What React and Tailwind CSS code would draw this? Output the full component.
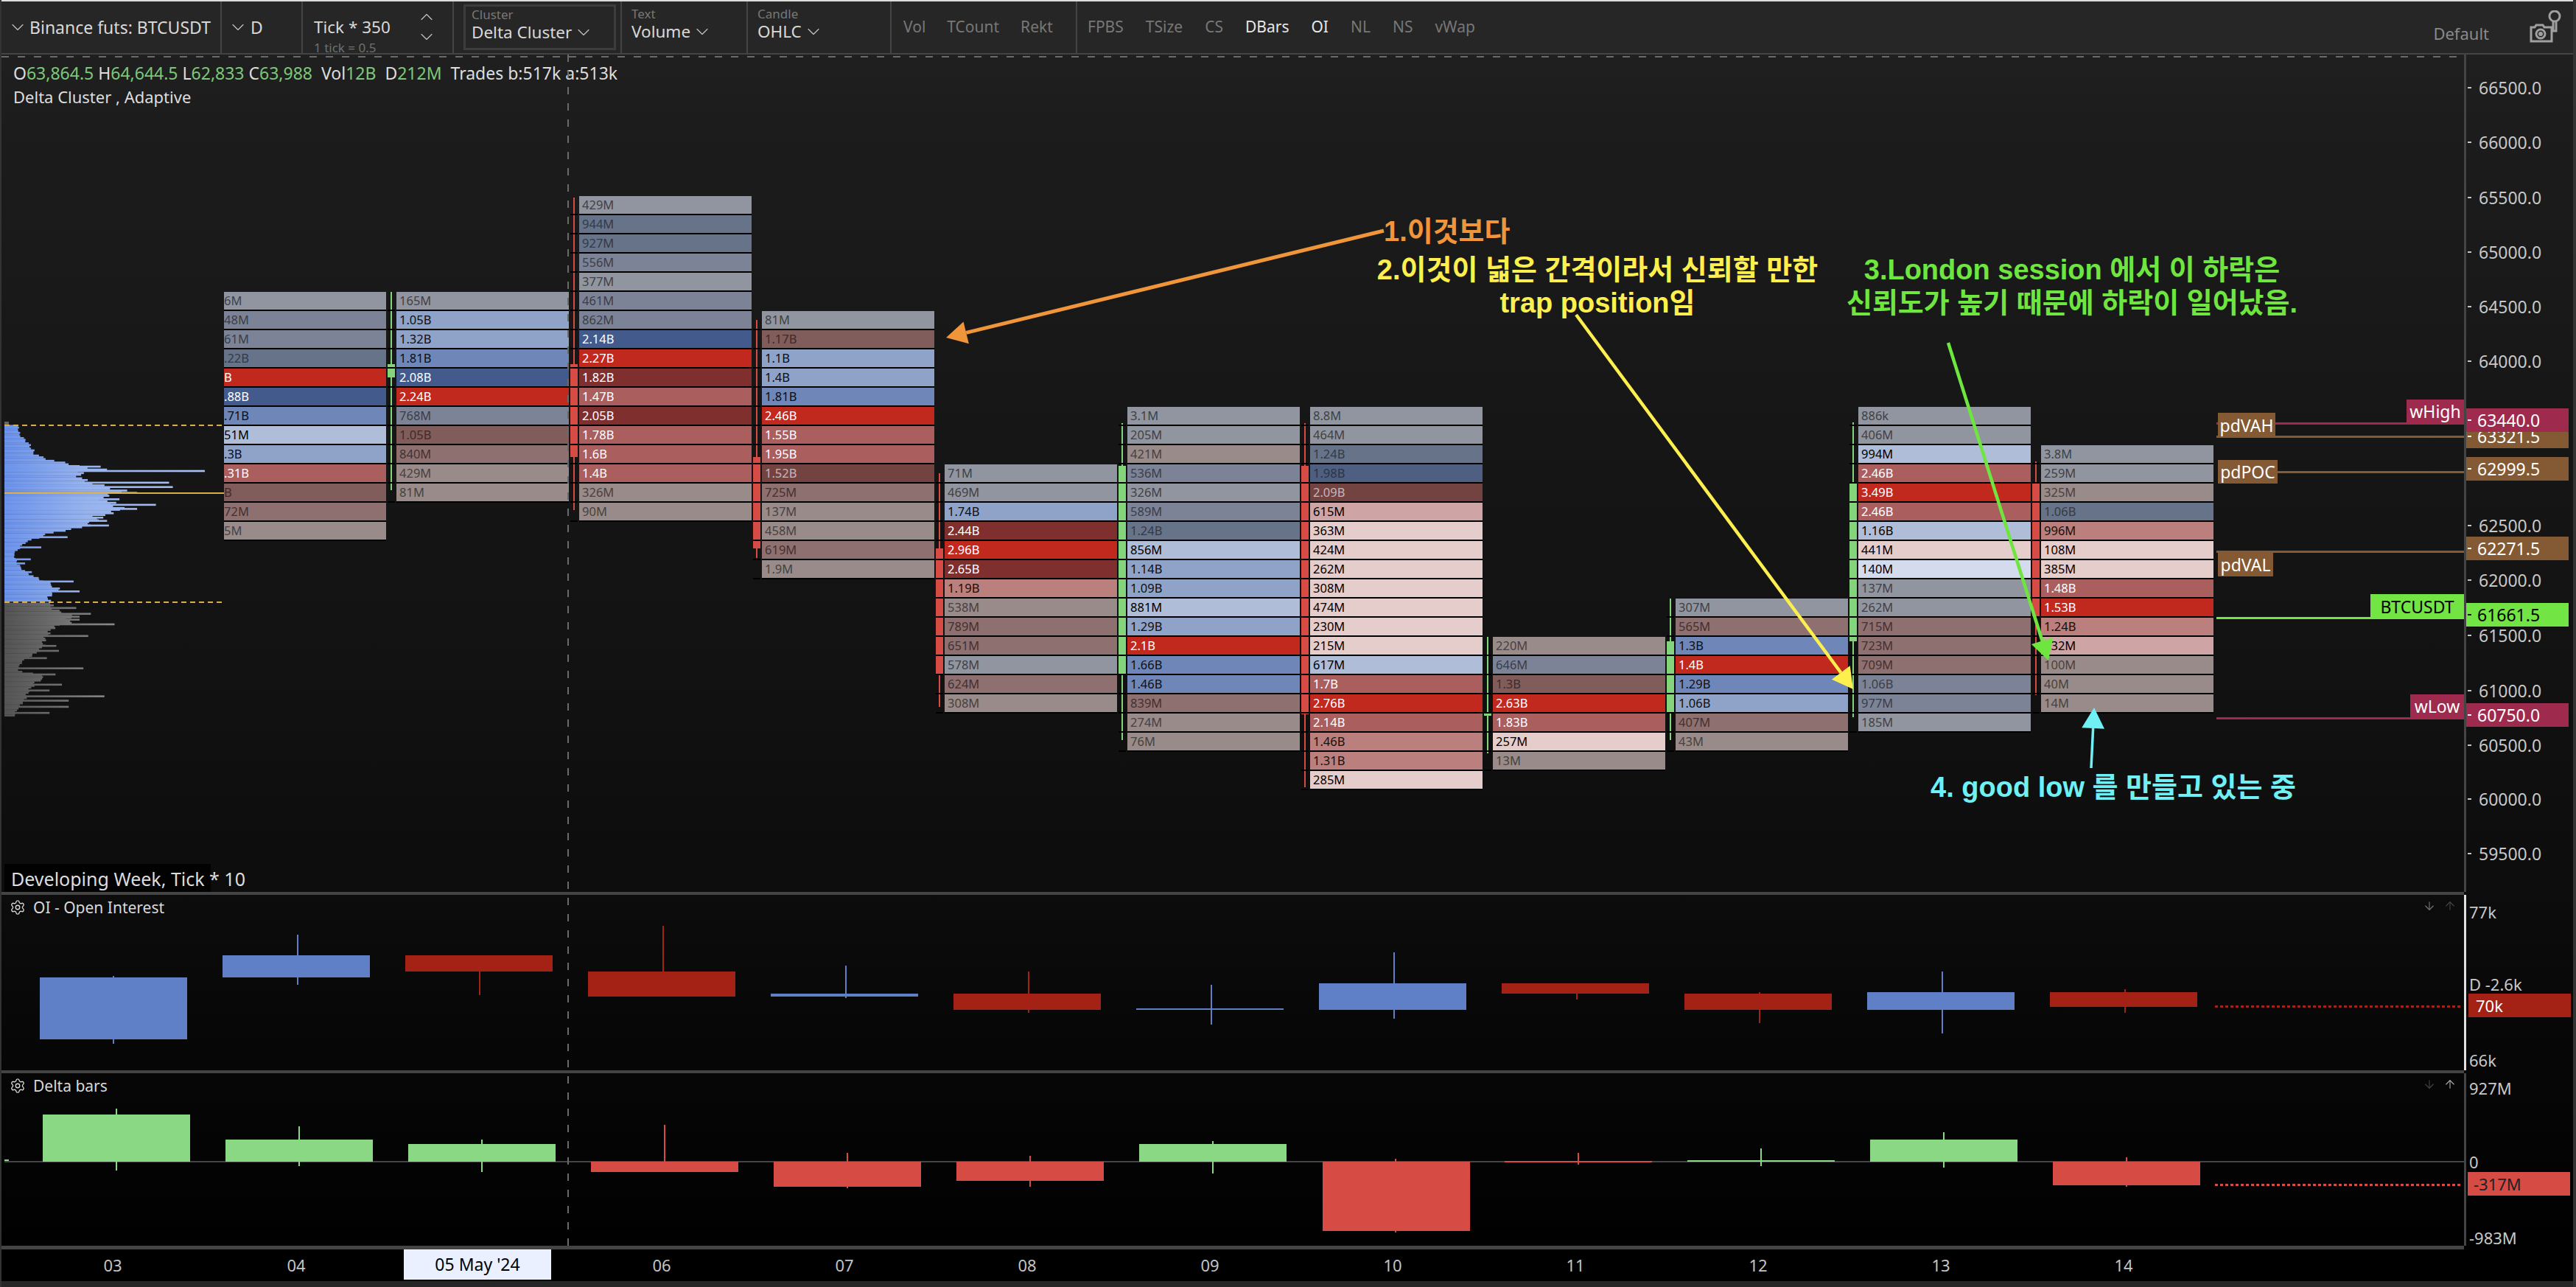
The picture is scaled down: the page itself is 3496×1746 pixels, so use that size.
import { ChevronDown, ChevronUp, Settings, ArrowDown, ArrowUp } from "lucide-react";

// x positions below are page coordinates, panes start at x=2 and the main pane at y=74
const CX = 2;
const MAIN_TOP = 74;
const ROW = 26;

const CELL = {
  g: "bg-[#91959f] text-[#3e4147]",
  s: "bg-[#7d8397] text-[#383e49]",
  t: "bg-[#667389] text-[#333a48]",
  N: "bg-[#4f5f81] text-[#2a3448]",
  n: "bg-[#425a8c] text-white",
  a: "bg-[#6f87b8] text-[#0b0f1a]",
  b: "bg-[#8fa3c9] text-[#0b0f1a]",
  c: "bg-[#afbdd9] text-black",
  e: "bg-[#d3dbec] text-black",
  r: "bg-[#c1291e] text-white",
  d: "bg-[#7f2f2d] text-white",
  D: "bg-[#734342] text-[#c9b5b5]",
  m: "bg-[#aa5e5e] text-white",
  M: "bg-[#bb7f7d] text-[#111111]",
  p: "bg-[#e5cdcc] text-black",
  P: "bg-[#cfa4a4] text-black",
  w: "bg-[#805c5b] text-[#402a2a]",
  x: "bg-[#8e7071] text-[#43302f]",
  y: "bg-[#988b89] text-[#474141]",
};

const col = (s) => s.split(" ").map((c) => c.split(":"));

const COLUMNS = [
  { x: 538, k: 5, up: true, wick: [396, 665], body: [494, 512], rows: col("165M:g 1.05B:b 1.32B:b 1.81B:a 2.08B:n 2.24B:r 768M:s 1.05B:w 840M:x 429M:y 81M:y") },
  { x: 786, k: 0, up: false, wick: [268, 692], body: [494, 620], rows: col("429M:g 944M:t 927M:t 556M:s 377M:g 461M:s 862M:s 2.14B:n 2.27B:r 1.82B:d 1.47B:m 2.05B:d 1.78B:m 1.6B:m 1.4B:m 326M:y 90M:y") },
  { x: 1034, k: 6, up: false, wick: [434, 757], body: [620, 744], rows: col("81M:g 1.17B:w 1.1B:b 1.4B:b 1.81B:a 2.46B:r 1.55B:m 1.95B:m 1.52B:D 725M:x 137M:y 458M:y 619M:x 1.9M:y") },
  { x: 1282, k: 14, up: false, wick: [642, 959], body: [744, 914], rows: col("71M:g 469M:g 1.74B:b 2.44B:d 2.96B:r 2.65B:d 1.19B:M 538M:y 789M:x 651M:x 578M:g 624M:x 308M:y") },
  { x: 1530, k: 11, up: true, wick: [574, 1004], body: [632, 914], rows: col("3.1M:g 205M:g 421M:y 536M:s 326M:g 589M:s 1.24B:t 856M:c 1.14B:b 1.09B:b 881M:c 1.29B:b 2.1B:r 1.66B:a 1.46B:a 839M:x 274M:y 76M:y") },
  { x: 1778, k: 11, up: false, wick: [574, 1068], body: [632, 969], rows: col("8.8M:g 464M:g 1.24B:t 1.98B:N 2.09B:D 615M:P 363M:p 424M:p 262M:p 308M:p 474M:p 230M:p 215M:p 617M:c 1.7B:m 2.76B:r 2.14B:m 1.46B:M 1.31B:M 285M:p") },
  { x: 2026, k: 23, up: true, wick: [864, 1022], body: [968, 971], rows: col("220M:y 646M:s 1.3B:w 2.63B:r 1.83B:m 257M:p 13M:y") },
  { x: 2274, k: 21, up: true, wick: [812, 1004], body: [870, 966], rows: col("307M:g 565M:x 1.3B:a 1.4B:r 1.29B:a 1.06B:b 407M:x 43M:y") },
  { x: 2522, k: 11, up: true, wick: [573, 973], body: [656, 870], rows: col("886k:g 406M:g 994M:c 2.46B:m 3.49B:r 2.46B:m 1.16B:c 441M:p 140M:e 137M:g 262M:g 715M:x 723M:x 709M:x 1.06B:s 977M:s 185M:g") },
  { x: 2770, k: 13, up: false, wick: [626, 943], body: [656, 838], rows: col("3.8M:g 259M:g 325M:y 1.06B:t 996M:M 108M:p 385M:p 1.48B:m 1.53B:r 1.24B:M 732M:P 100M:y 40M:y 14M:y") },
];

// first column is cut off by the profile
const FIRST = col("6M:g 48M:s 61M:s .22B:t B:r .88B:n .71B:a 51M:c .3B:b .31B:m B:w 72M:x 5M:y");

const OI_BARS = [
  [54, 1326, 1410, 153, 1324, 1416, "b"],
  [302, 1296, 1326, 403, 1268, 1336, "b"],
  [550, 1296, 1318, 650, 1296, 1350, "r"],
  [798, 1318, 1352, 899, 1256, 1352, "r"],
  [1046, 1348, 1352, 1147, 1310, 1354, "b"],
  [1294, 1348, 1370, 1395, 1318, 1374, "r"],
  [1542, 1368, 1370, 1643, 1336, 1390, "b"],
  [1790, 1334, 1370, 1891, 1292, 1382, "b"],
  [2038, 1334, 1348, 2139, 1334, 1356, "r"],
  [2286, 1348, 1370, 2387, 1346, 1388, "r"],
  [2534, 1346, 1370, 2635, 1318, 1402, "b"],
  [2782, 1346, 1366, 2883, 1342, 1374, "r"],
];

const DELTA_BARS = [
  [58, 1512, 1576, 157, 1504, 1588, "g"],
  [306, 1546, 1576, 405, 1528, 1582, "g"],
  [554, 1552, 1576, 653, 1546, 1590, "g"],
  [802, 1576, 1590, 901, 1526, 1590, "r"],
  [1050, 1576, 1610, 1149, 1564, 1612, "r"],
  [1298, 1576, 1602, 1397, 1568, 1610, "r"],
  [1546, 1552, 1576, 1645, 1548, 1592, "g"],
  [1795, 1576, 1670, 1893, 1572, 1672, "r"],
  [2042, 1575, 1577, 2141, 1564, 1580, "r"],
  [2290, 1574, 1576, 2389, 1558, 1582, "g"],
  [2538, 1546, 1576, 2637, 1536, 1584, "g"],
  [2786, 1576, 1608, 2885, 1570, 1610, "r"],
];

const BAR_COLOR = { b: "#5f80c6", r: "#a42115", g: "#8ad784", R: "#d64b43" };

const PRICES = [
  ["66500.0", 119], ["66000.0", 193], ["65500.0", 268], ["65000.0", 342], ["64500.0", 416],
  ["64000.0", 490], ["62500.0", 713], ["62000.0", 787], ["61500.0", 862],
  ["61000.0", 937], ["60500.0", 1011], ["60000.0", 1084], ["59500.0", 1158],
];

const TAGS = [
  ["63321.5", 576, 608, "bg-[#835a33]", "text-white"],
  ["63440.0", 554, 586, "bg-[#9e2b4e]", "text-white"],
  ["62999.5", 620, 652, "bg-[#835a33]", "text-white"],
  ["62271.5", 728, 760, "bg-[#835a33]", "text-white"],
  ["61661.5", 818, 850, "bg-[#72e444]", "text-black"],
  ["60750.0", 954, 986, "bg-[#9e2b4e]", "text-white"],
];

const DATES = [["03", 153], ["04", 402], ["06", 898], ["07", 1146], ["08", 1394], ["09", 1642], ["10", 1890], ["11", 2138], ["12", 2386], ["13", 2634], ["14", 2882]];

function Chevron() {
  return <ChevronDown size={28} strokeWidth={1} className="shrink-0 text-[#c4c4c4]" />;
}

function Selector({ label, value, width, boxed }) {
  return (
    <div className={"h-full border-r-2 border-[#444444] " + width + (boxed ? " p-[4px_6px_4px_13px]" : " pl-[13px]")}>
      <div className={boxed ? "h-full border-[3px] border-[#3d3d3d] pl-[8px]" : "pt-[5px]"}>
        <div className={"text-[17px] leading-[20px] text-[#777777] " + (boxed ? "mt-[1px]" : "mt-[2px]")}>{label}</div>
        <div className="flex items-center gap-[2px] text-[22.5px] leading-[26px] text-[#d8d8d8]">
          {value}
          <Chevron />
        </div>
      </div>
    </div>
  );
}

function ToggleGroup({ items, width }) {
  return (
    <div className={"h-full flex items-center gap-[29px] border-r-2 border-[#444444] pl-[16px] text-[21px] text-[#777777] " + width}>
      {items.map((it) => (
        <span key={it.t}>{it.t}</span>
      ))}
    </div>
  );
}

function CameraIcon() {
  return (
    <svg width="44" height="46" viewBox="0 0 44 46" fill="none" stroke="#a0a0a0" strokeWidth="3">
      <path d="M3 23h5l2-3h9l2 3h10v19H3z" />
      <circle cx="16" cy="32" r="6" />
      <circle cx="16" cy="32" r="1.5" />
      <circle cx="35" cy="8" r="7" />
      <path d="M33 15v13h4V15" />
    </svg>
  );
}

function Toolbar() {
  return (
    <div className="h-[70px] shrink-0 flex items-center bg-[#262626]">
      <div className="h-full w-[299px] flex items-center gap-[2px] pl-[8px] border-r-2 border-[#444444] text-[23px] text-[#d8d8d8]">
        <Chevron />
        <span>Binance futs: BTCUSDT</span>
      </div>
      <div className="h-full w-[110px] flex items-center gap-[3px] pl-[8px] border-r-2 border-[#444444] text-[23px] text-[#d8d8d8]">
        <Chevron />
        <span>D</span>
      </div>
      <div className="h-full w-[205px] flex border-r-2 border-[#444444] pl-[15px]">
        <div className="w-[139px] pt-[21px]">
          <div className="text-[22.5px] leading-[28px] text-[#d8d8d8]">Tick * 350</div>
          <div className="mt-[4px] text-[17px] leading-[20px] text-[#707070]">1 tick = 0.5</div>
        </div>
        <div className="flex flex-col -space-y-[1px] pt-[7px]">
          <ChevronUp size={28} strokeWidth={1} className="text-[#c4c4c4]" />
          <ChevronDown size={28} strokeWidth={1} className="text-[#c4c4c4]" />
        </div>
      </div>
      <Selector label="Cluster" value="Delta Cluster" width="w-[228px]" boxed />
      <Selector label="Text" value="Volume" width="w-[171px]" />
      <Selector label="Candle" value="OHLC" width="w-[195px]" />
      <ToggleGroup width="w-[252px]" items={[{ t: "Vol" }, { t: "TCount" }, { t: "Rekt" }]} />
      <div className="flex-1 h-full flex items-center gap-[30px] pl-[14px] text-[21px] text-[#777777]">
        {[["FPBS"], ["TSize"], ["CS"], ["DBars", 1], ["OI", 1], ["NL"], ["NS"], ["vWap"]].map(([t, on]) => (
          <span key={t} className={on ? "text-[#e8e8e8]" : ""}>{t}</span>
        ))}
      </div>
      <div className="h-full flex items-center pr-[16px]">
        <span className="mt-[16px] mr-[54px] text-[22px] text-[#8a8a8a]">Default</span>
        <CameraIcon />
      </div>
    </div>
  );
}

function Cell({ text, code, pad }) {
  return (
    <div className={"flex-1 h-[24px] flex items-center whitespace-nowrap overflow-hidden text-[16.5px] " + pad + " " + CELL[code]}>
      {text}
    </div>
  );
}

function ClusterColumn({ x, k, up, wick, body, rows }) {
  const top = 266 + k * ROW;
  const color = up ? "bg-[#83d47a]" : "bg-[#d64b43]";
  return (
    <div className="absolute w-[248px]" style={{ left: x - 14 - CX, top: top - MAIN_TOP }}>
      <div className={"absolute left-[6px] w-[2px] " + color} style={{ top: wick[0] - top, height: wick[1] - wick[0] }} />
      <div className={"absolute left-[2px] w-[10px] " + color} style={{ top: body[0] - top, height: body[1] - body[0] }} />
      {rows.map(([text, code], i) => (
        <div key={i} className="relative h-[26px]">
          <div className="flex h-[24px]">
            <div className="w-[14px]" />
            <Cell text={text} code={code} pad="pl-[4px]" />
          </div>
          <div className="flex h-[2px]">
            <div className="w-[2px]" />
            <div className="w-[10px] bg-black" />
            <div className="w-[2px]" />
            <div className="flex-1 bg-black" />
          </div>
        </div>
      ))}
    </div>
  );
}

function lerp(points, y) {
  for (let i = 0; i < points.length - 1; i++) {
    const [y0, v0] = points[i];
    const [y1, v1] = points[i + 1];
    if (y >= y0 && y <= y1) return v0 + ((v1 - v0) * (y - y0)) / (y1 - y0);
  }
  return points[points.length - 1][1];
}

// profile is sampled in crop units of the picture: x = v / 1.96, y = 380 + v / 2.529
const BLUE_BASE = [[500, 50], [530, 55], [560, 80], [600, 100], [620, 150], [640, 235], [660, 225], [680, 225], [700, 265], [725, 350], [745, 280], [770, 320], [790, 340], [810, 275], [830, 260], [850, 230], [865, 150], [880, 115], [900, 70], [925, 50], [940, 38], [975, 50], [1000, 70], [1020, 100], [1040, 135], [1060, 165], [1080, 140], [1105, 135]];
const BLUE_SPIKES = [[640, 268], [650, 285], [655, 545], [695, 450], [710, 460], [730, 365], [752, 318], [771, 415], [785, 365], [815, 275], [826, 285], [842, 290], [882, 180], [917, 110], [958, 82], [972, 67], [1002, 85], [1034, 196], [1068, 212]];
const GREY_BASE = [[1108, 140], [1130, 150], [1150, 195], [1175, 195], [1190, 150], [1230, 125], [1260, 120], [1285, 95], [1310, 60], [1340, 50], [1360, 130], [1380, 100], [1410, 80], [1440, 70], [1460, 55], [1480, 45], [1500, 38]];
const GREY_SPIKES = [[1125, 203], [1145, 242], [1155, 212], [1165, 212], [1181, 305], [1221, 235], [1255, 150], [1272, 157], [1297, 125], [1332, 222], [1353, 148], [1388, 165], [1408, 132], [1428, 278], [1443, 183], [1464, 183], [1485, 132]];

function ProfileBars({ base, spikes, from, to, fill }) {
  const bars = [];
  for (let y = from, i = 0; y < to; y += 6, i++) {
    const v = lerp(base, y) * (0.95 + 0.05 * Math.sin(i * 1.9));
    bars.push([y, v]);
  }
  spikes.forEach((s) => bars.push(s));
  return bars.map(([y, v], i) => (
    <rect key={i} x="4" y={380 + y / 2.529 - 1.3 - MAIN_TOP} width={Math.max(2, (v - 12) / 1.96)} height="2.6" fill={fill} />
  ));
}

function Profile() {
  return (
    <svg className="absolute left-0 top-0" width="310" height="920">
      <defs>
        <linearGradient id="pb" gradientUnits="userSpaceOnUse" x1="4" x2="280" y1="0" y2="0">
          <stop offset="0" stopColor="#6c93ec" />
          <stop offset="0.4" stopColor="#97b3ee" />
          <stop offset="1" stopColor="#a9c0f2" />
        </linearGradient>
        <linearGradient id="pg" gradientUnits="userSpaceOnUse" x1="4" x2="160" y1="0" y2="0">
          <stop offset="0" stopColor="#545454" />
          <stop offset="1" stopColor="#8c8c8c" />
        </linearGradient>
      </defs>
      <rect x="4" y={572 - MAIN_TOP} width="6" height="6" fill="#666666" />
      <ProfileBars base={BLUE_BASE} spikes={BLUE_SPIKES} from={500} to={1105} fill="url(#pb)" />
      <ProfileBars base={GREY_BASE} spikes={GREY_SPIKES} from={1110} to={1500} fill="url(#pg)" />
      <line x1="4" x2="302" y1={577 - MAIN_TOP} y2={577 - MAIN_TOP} stroke="#d9ac4c" strokeWidth="2" strokeDasharray="7 5" />
      <line x1="4" x2="302" y1={669 - MAIN_TOP} y2={669 - MAIN_TOP} stroke="#d9ac4c" strokeWidth="2" />
      <line x1="4" x2="302" y1={817 - MAIN_TOP} y2={817 - MAIN_TOP} stroke="#d9ac4c" strokeWidth="2" strokeDasharray="7 5" />
    </svg>
  );
}

function Arrow({ from, to, color, width, head = 28 }) {
  const dx = to[0] - from[0];
  const dy = to[1] - from[1];
  const len = Math.hypot(dx, dy);
  const ux = dx / len;
  const uy = dy / len;
  const bx = to[0] - ux * head;
  const by = to[1] - uy * head;
  const half = head * 0.55;
  const pts = [to, [bx - uy * half, by + ux * half], [bx + uy * half, by - ux * half]];
  return (
    <g transform={`translate(${-CX} ${-MAIN_TOP})`}>
      <line x1={from[0]} y1={from[1]} x2={bx} y2={by} stroke={color} strokeWidth={width} />
      <polygon points={pts.map((p) => p.join(",")).join(" ")} fill={color} />
    </g>
  );
}

function Annotations() {
  const font = "font-['Liberation_Sans','Noto_Sans_CJK_KR',sans-serif]";
  return (
    <>
      <svg className="absolute left-0 top-0 pointer-events-none" width="3342" height="1136">
        <Arrow from={[1878, 313]} to={[1284, 458]} color="#f0953a" width={5} />
        <Arrow from={[2139, 427]} to={[2515, 935]} color="#fdf04e" width={4.5} />
        <Arrow from={[2644, 465]} to={[2780, 896]} color="#6ee63f" width={4.5} />
        <Arrow from={[2838, 1042]} to={[2842, 960]} color="#6ff0f5" width={3.5} />
      </svg>
      <div className={"absolute left-[1876px] top-[218px] text-[38px] leading-[44px] font-bold text-[#f0953a] " + font}>
        1.이것보다
      </div>
      <div className={"absolute left-[1766px] top-[270px] w-[800px] text-center text-[38px] leading-[45px] font-bold text-[#fdf04e] " + font}>
        <div>2.이것이 넓은 간격이라서 신뢰할 만한</div>
        <div>trap position임</div>
      </div>
      <div className={"absolute left-[2410px] top-[270px] w-[800px] text-center text-[38px] leading-[45px] font-bold text-[#6ee63f] " + font}>
        <div>3.London session 에서 이 하락은</div>
        <div>신뢰도가 높기 때문에 하락이 일어났음.</div>
      </div>
      <div className={"absolute left-[2618px] top-[972px] whitespace-nowrap text-[38px] leading-[44px] font-bold text-[#6ff0f5] " + font}>
        4. good low 를 만들고 있는 중
      </div>
    </>
  );
}

function Level({ top, left, width, color }) {
  return <div className={"absolute h-[3px] " + color} style={{ top: top - MAIN_TOP, left: left - CX, width }} />;
}

function Tag({ text, left, width, top, height, className }) {
  return (
    <div
      className={"absolute flex items-center justify-center text-[23px] whitespace-nowrap " + className}
      style={{ left: left - CX, width, top: top - MAIN_TOP, height }}
    >
      {text}
    </div>
  );
}

function Legend() {
  const g = "text-[#7cc87a]";
  return (
    <div className="pl-[16px] pt-[10px] text-[#dddddd]">
      <div className="text-[23px] leading-[30px] whitespace-pre">
        O<span className={g}>63,864.5</span> H<span className={g}>64,644.5</span> L<span className={g}>62,833</span> C<span className={g}>63,988</span>{"  "}Vol<span className={g}>12B</span>{"  "}D<span className={g}>212M</span>{"  "}Trades b:517k a:513k
      </div>
      <div className="text-[22px] leading-[34px]">Delta Cluster , Adaptive</div>
    </div>
  );
}

function MainPane() {
  return (
    <div className="h-[1136px] flex">
      <div className="relative w-[3342px] overflow-hidden">
        <Legend />
        <Profile />
        <div className="absolute left-[302px] top-[322px] w-[220px]">
          {FIRST.map(([text, code], i) => (
            <div key={i} className="h-[26px] bg-black">
              <Cell text={text} code={code} pad="" />
            </div>
          ))}
        </div>
        {COLUMNS.map((c) => (
          <ClusterColumn key={c.x} {...c} />
        ))}

        <Level top={573} left={3008} width={336} color="bg-[#9e2b4e]" />
        <Level top={591} left={3008} width={336} color="bg-[#835a33]" />
        <Level top={639} left={3091} width={253} color="bg-[#835a33]" />
        <Level top={747} left={3008} width={336} color="bg-[#835a33]" />
        <Level top={837} left={3008} width={336} color="bg-[#72e444]" />
        <Level top={973} left={3008} width={336} color="bg-[#9e2b4e]" />
        <Tag text="pdVAH" left={3010} width={78} top={560} height={34} className="bg-[#835a33] text-white" />
        <Tag text="wHigh" left={3266} width={78} top={542} height={33} className="bg-[#9e2b4e] text-white" />
        <Tag text="pdPOC" left={3010} width={81} top={624} height={32} className="bg-[#835a33] text-white" />
        <Tag text="pdVAL" left={3010} width={75} top={750} height={32} className="bg-[#835a33] text-white" />
        <Tag text="BTCUSDT" left={3217} width={127} top={806} height={34} className="bg-[#72e444] text-black" />
        <Tag text="wLow" left={3271} width={73} top={942} height={33} className="bg-[#9e2b4e] text-white" />

        <Annotations />

        <div className="absolute left-[4px] top-[1098px] bg-black/80 h-[38px] w-[280px]" />
        <div className="absolute left-[13px] top-[1100px] text-[25px] leading-[36px] text-[#dddddd] whitespace-nowrap">Developing Week, Tick * 10</div>
      </div>
      <PriceAxis />
    </div>
  );
}

function PriceAxis() {
  return (
    <div className="relative w-[148px] border-l-[3px] border-[#444444] text-[23px] overflow-hidden">
      {PRICES.map(([p, y]) => (
        <div key={p} className="absolute left-[2px] flex items-center gap-[10px] text-[#c8c8c8] h-[32px]" style={{ top: y - MAIN_TOP - 16 }}>
          <span className="w-[5px] h-[2px] bg-[#c8c8c8]" />
          {p}
        </div>
      ))}
      {TAGS.map(([p, a, b, bg, fg]) => (
        <div key={p} className={"absolute left-0 w-[139px] flex items-center gap-[8px] pl-[2px] " + bg + " " + fg} style={{ top: a - MAIN_TOP, height: b - a }}>
          <span className={"w-[5px] h-[2px] " + (fg === "text-black" ? "bg-black" : "bg-white")} />
          {p}
        </div>
      ))}
    </div>
  );
}

function SubPane({ title, bars, top, height, zero, dottedY, dottedClass, axis, axisClass, down, up }) {
  return (
    <div className="flex" style={{ height }}>
      <div className="relative w-[3342px] overflow-hidden">
        <div className="flex items-center gap-[10px] pl-[11px] pt-[5px] text-[21px] leading-[24px] text-[#d8d8d8]">
          <Settings size={22} strokeWidth={1.5} />
          <span>{title}</span>
        </div>
        <div className="absolute right-[10px] top-[6px] flex gap-[10px]">
          <ArrowDown size={18} strokeWidth={1.5} className={down} />
          <ArrowUp size={18} strokeWidth={1.5} className={up} />
        </div>
        {zero && <div className="absolute left-[4px] right-0 h-[2px] bg-[#444444]" style={{ top: zero - top }} />}
        {zero && <div className="absolute left-[4px] w-[6px] h-[2px] bg-[#8ad784]" style={{ top: zero - top - 2 }} />}
        {bars.map(([x, y0, y1, wx, w0, w1, c], i) => {
          const color = c === "r" && zero ? BAR_COLOR.R : BAR_COLOR[c];
          return (
            <div key={i}>
              <div className="absolute w-[1.5px]" style={{ left: wx - CX, top: w0 - top, height: w1 - w0, background: color }} />
              <div className="absolute w-[200px]" style={{ left: x - CX, top: y0 - top, height: y1 - y0, background: color }} />
            </div>
          );
        })}
        <div className={"absolute left-[3004px] w-[334px] h-[3px] " + dottedClass} style={{ top: dottedY - top }} />
      </div>
      <div className={"relative w-[148px] border-l-[3px] text-[22px] text-[#c8c8c8] " + axisClass}>
        {axis.map(([t, y, cls]) => (
          <div key={t} className={"absolute left-[4px] flex items-center whitespace-nowrap " + (cls || "h-[32px] w-[140px]")} style={{ top: y - top - 16 }}>
            {t}
          </div>
        ))}
      </div>
    </div>
  );
}

function TimeAxis() {
  return (
    <div className="relative h-[43px] bg-black text-[22px] text-[#c4c4c4]">
      {DATES.map(([t, x]) => (
        <span key={t} className="absolute top-0 h-[43px] flex items-center -translate-x-1/2" style={{ left: x - CX }}>
          {t}
        </span>
      ))}
      <div className="absolute left-[546px] top-0 w-[200px] h-[41px] flex items-center justify-center bg-[#eaf0ff] text-[23px] text-black">05 May &apos;24</div>
    </div>
  );
}

export default function App() {
  return (
    <div className="relative w-[3496px] h-[1746px] overflow-hidden flex flex-col border-l-2 border-r-4 border-[#333333] bg-[linear-gradient(to_bottom,#222222_0%,#1c1c1c_10%,#111111_55%,#0c0c0c_70%,#070707_80%,#010101_97%)] font-['Noto_Sans',sans-serif]">
      <div className="h-[2px] shrink-0 bg-[#dddddd]" />
      <Toolbar />
      <div className="h-[2px] shrink-0 bg-[#444444]" />
      <div className="relative flex flex-col">
        <MainPane />
        <div className="h-[4px] w-[3342px] bg-[#444444]" />
        <SubPane
          title="OI - Open Interest"
          bars={OI_BARS}
          top={1214}
          height={238}
          dottedY={1364}
          dottedClass="bg-[repeating-linear-gradient(to_right,#a42115_0_4px,transparent_4px_7px)]"
          down="text-[#777777]"
          up="text-[#444444]"
          axisClass="border-[#e0e0e0]"
          axis={[
            ["77k", 1237],
            ["D -2.6k", 1335],
            ["70k", 1364, "h-[32px] w-[139px] -ml-[1px] pl-[10px] bg-[#a42115] text-white"],
            ["66k", 1438],
          ]}
        />
        <div className="h-[4px] w-[3342px] bg-[#444444]" />
        <SubPane
          title="Delta bars"
          bars={DELTA_BARS}
          top={1456}
          height={234}
          zero={1575}
          dottedY={1606}
          dottedClass="bg-[repeating-linear-gradient(to_right,#d64b43_0_4px,transparent_4px_7px)]"
          down="text-[#444444]"
          up="text-[#aaaaaa]"
          axisClass="border-[#444444]"
          axis={[
            ["927M", 1476],
            ["0", 1576],
            ["-317M", 1606, "h-[32px] w-[139px] -ml-[2px] pl-[8px] bg-[#d64b43] text-[#222222]"],
            ["-983M", 1679],
          ]}
        />
        <div className="h-[5px] w-[3342px] bg-[#444444]" />
        <div className="absolute left-[768px] top-0 w-[2px] h-[1616px] bg-[repeating-linear-gradient(to_bottom,#6a6a6a_0_10px,transparent_10px_22px)]" />
        <div className="absolute left-0 top-[2px] w-[3342px] h-[2px] bg-[repeating-linear-gradient(to_right,#6a6a6a_0_10px,transparent_10px_22px)]" />
      </div>
      <TimeAxis />
      <div className="flex-1 bg-[#262626]" />
    </div>
  );
}
